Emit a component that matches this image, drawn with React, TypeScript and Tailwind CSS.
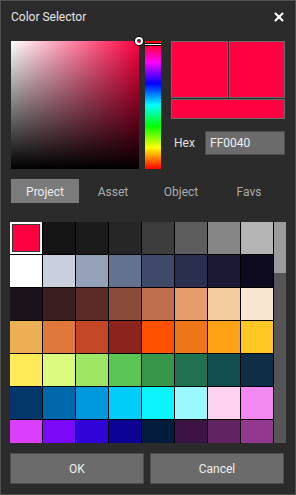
import { X } from 'lucide-react';

const palette: string[] = [
    '#ff0040', '#141414', '#1b1b1b', '#262626', '#3c3c3c', '#5d5d5d', '#868686', '#b4b4b4',
    '#ffffff', '#c9cfdc', '#94a1b9', '#63728f', '#3f4a6b', '#2a2e4f', '#1a1b33', '#0e0a1f',
    '#1c121c', '#3b1e20', '#5c2a27', '#8a4b3b', '#bf6f4e', '#e69c6c', '#f5cba0', '#f8e6d1',
    '#edaf53', '#e0773b', '#c44728', '#8b231e', '#ff5000', '#ed7618', '#ffa215', '#ffc825',
    '#ffeb57', '#dafb7e', '#9ee664', '#5bc653', '#379649', '#1f7150', '#124e4f', '#0d2e44',
    '#03376b', '#0068aa', '#0098dc', '#00cdf9', '#0af5ff', '#99f9ff', '#ffd3ef', '#f288f1',
    '#db3ffd', '#7a09fa', '#3003d9', '#0c0293', '#031c3b', '#3b1443', '#622461', '#93388f',
    '#c64ba6', '#f389f5', '#ea8aa0', '#c8405d', '#8d1e48', '#4c0c2f', '#2b0a23', '#120711',
];

const tabs = ['Project', 'Asset', 'Object', 'Favs'];

export default function App() {
    const selected = 0;

    return (
        <div
            className="w-[296px] h-[495px] bg-[#2b2b2b] border border-[#505050] flex flex-col overflow-hidden select-none"
            style={{ fontFamily: 'Roboto, "Liberation Sans", sans-serif' }}
        >
            {/* Title bar */}
            <div className="h-[31px] px-[10px] flex items-center justify-between">
                <span className="text-[12px] text-[#e6e6e6]">Color Selector</span>
                <X size={14} strokeWidth={3.5} className="text-white mr-[-1px]" />
            </div>

            {/* Picker */}
            <div className="mt-[9px] px-[10px] flex">
                <div className="relative w-[128px] h-[128px] bg-[linear-gradient(to_bottom,transparent,#000),linear-gradient(to_right,#fff,#ff0040)]">
                    <div className="absolute right-[-5px] top-[-5px] w-[10px] h-[10px] rounded-full border border-black">
                        <div className="w-full h-full rounded-full border-2 border-white" />
                    </div>
                </div>

                <div className="relative ml-[6px] w-[16px] h-[128px] bg-[linear-gradient(to_bottom,#f00,#f0f,#00f,#0ff,#0f0,#ff0,#f00)]">
                    <div className="absolute left-0 right-0 top-[2px] h-[3px] border-y border-black bg-white" />
                </div>

                <div className="ml-[10px] flex-1 flex flex-col">
                    <div className="flex gap-px">
                        <div className="w-[57px] h-[57px] bg-[#ff0040] border border-[#6a6a6a]" />
                        <div className="w-[56px] h-[57px] bg-[#ff0040] border border-[#6a6a6a]" />
                    </div>
                    <div className="mt-px h-[20px] bg-[#ff0040] border border-[#6a6a6a]" />
                    <div className="mt-[12px] flex items-center">
                        <span className="ml-[3px] w-[30px] text-[12px] text-[#e0e0e0]">Hex</span>
                        <div className="ml-auto w-[80px] h-[24px] bg-[#6b6b6b] border border-[#4e4e4e] flex items-center px-[4px] text-[12px] text-[#f0f0f0]">
                            FF0040
                        </div>
                    </div>
                </div>
            </div>

            {/* Tabs */}
            <div className="mt-[10px] px-[10px] flex">
                {tabs.map((t, i) => (
                    <div
                        key={t}
                        className={`w-[68px] h-[24px] pt-px flex items-center justify-center text-[12px] ${
                            i === 0 ? 'bg-[#7b7b7b] text-[#ececec] w-[67px]' : 'text-[#acacac]'
                        }`}
                    >
                        {t}
                    </div>
                ))}
            </div>

            {/* Swatch grid */}
            <div className="mt-[19px] pl-[9px] flex h-[221px]">
                <div className="w-[264px] h-full overflow-hidden bg-black">
                    <div className="grid grid-cols-[repeat(8,32px)] gap-px">
                        {palette.map((c, i) => (
                            <div
                                key={i}
                                className={`h-[32px] ${i === selected ? 'border-2 border-white' : ''}`}
                                style={{ backgroundColor: i === selected ? '#ffffff' : c }}
                            >
                                {i === selected && (
                                    <div className="w-full h-full border border-[#3a3a3a]" style={{ backgroundColor: c }} />
                                )}
                            </div>
                        ))}
                    </div>
                </div>
                <div className="w-[12px] h-full bg-[#555555] flex flex-col">
                    <div className="h-[51px] bg-[#9a9a9a]" />
                </div>
            </div>

            {/* Buttons */}
            <div className="mt-[10px] pl-[9px] flex gap-[6px]">
                <button className="w-[134px] h-[31px] bg-[#6b6b6b] border border-[#4e4e4e] text-[12px] text-[#f0f0f0]">
                    OK
                </button>
                <button className="w-[134px] h-[31px] bg-[#6b6b6b] border border-[#4e4e4e] text-[12px] text-[#f0f0f0]">
                    Cancel
                </button>
            </div>
        </div>
    );
}
